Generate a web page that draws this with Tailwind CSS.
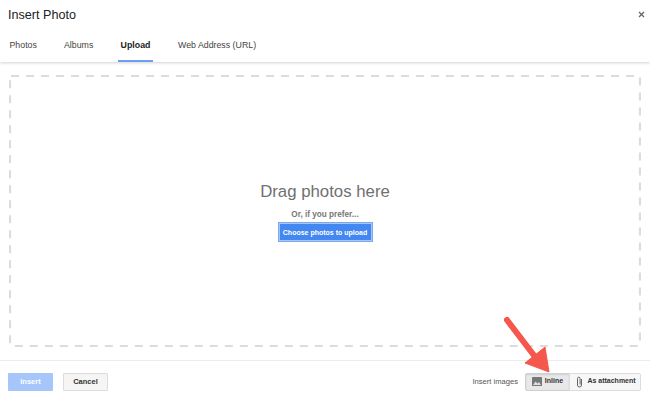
<!DOCTYPE html>
<html>
<head>
<meta charset="utf-8">
<script src="https://cdn.jsdelivr.net/npm/@tailwindcss/browser@4"></script>
</head>
<body class="m-0 bg-white">
<div class="relative w-[650px] h-[400px] overflow-hidden bg-white flex flex-col font-['Liberation_Sans',Arial,sans-serif]">
  <header class="h-[62px] shrink-0 flex flex-col shadow-[0_1px_3px_rgba(0,0,0,0.18)] relative">
    <div class="h-[32px] pl-[8px] pr-[5px] pt-[4px] flex items-start justify-between">
      <h1 class="text-[12.6px] leading-[22px] text-[#222]">Insert Photo</h1>
      <svg class="mt-[7px]" width="7" height="7" viewBox="0 0 7 7"><path d="M1 1L6 6M6 1L1 6" stroke="#666" stroke-width="1.3"/></svg>
    </div>
    <nav class="flex h-[30px] text-[8.8px] text-[#444]">
      <div class="pl-[9.5px] w-[64px] pt-[7px] leading-[12px]">Photos</div>
      <div class="w-[54px] pt-[7px] leading-[12px]">Albums</div>
      <div class="w-[35px] pt-[7px] leading-[12px] font-bold text-[#222] text-center border-b-2 border-[#6f9ef0]">Upload</div>
      <div class="pl-[25px] pt-[7px] leading-[12px]">Web Address (URL)</div>
    </nav>
  </header>
  <main class="relative mx-[9px] mt-[13px] h-[272px] flex flex-col items-center shrink-0">
    <svg class="absolute inset-0" width="632" height="272" viewBox="0 0 632 272"><rect x="1" y="1" width="630" height="270" rx="1" fill="none" stroke="#dcdcdc" stroke-width="2.2" stroke-dasharray="8 7"/></svg>
    <h2 class="mt-[106px] text-[16.8px] leading-[22px] text-[#707070]">Drag photos here</h2>
    <p class="mt-[6px] text-[8.2px] leading-[12px] font-bold text-[#777]">Or, if you prefer...</p>
    <button class="mt-[2px] w-[93px] h-[18px] bg-[#4387f0] border border-[#a9c6f5] outline outline-1 outline-[#7aa9f3] text-white text-[7px] font-bold leading-none">Choose photos to upload</button>
  </main>
  <footer class="mt-[13px] flex-1 border-t border-[#ececec] flex items-center justify-between pl-[8px] pr-[9px]">
    <div class="flex gap-[10px] items-center mt-[2px]">
      <button class="w-[45px] h-[18px] rounded-[1px] bg-[#a5c5fb] text-white text-[7.5px] font-bold">Insert</button>
      <button class="w-[45px] h-[18px] rounded-[1px] bg-[#f5f5f5] border border-[#dcdcdc] text-[#333] text-[7.5px] font-bold">Cancel</button>
    </div>
    <div class="flex items-center mt-[2px]">
      <span class="text-[7.6px] text-[#555] mr-[7px]">Insert images</span>
      <button class="w-[45px] h-[18px] bg-[#e8e8e8] border border-[#cfcfcf] rounded-l-[2px] flex items-center justify-center gap-[3px] text-[7px] font-bold text-[#333] shadow-[inset_0_1px_2px_rgba(0,0,0,0.1)]">
        <svg width="10" height="9" viewBox="0 0 10 9"><rect width="10" height="9" rx="0.5" fill="#777"/><path d="M1 8L3.5 4.5L5.5 6.5L7 5L9 8Z" fill="#ddd"/></svg>
        <span>Inline</span>
      </button>
      <button class="w-[72px] h-[18px] -ml-px bg-[#f7f7f7] border border-[#dcdcdc] rounded-r-[2px] flex items-center justify-center gap-[4px] pl-[2px] text-[7px] font-bold text-[#333]">
        <svg width="7" height="12" viewBox="0 0 7 12" fill="none"><path d="M5.5 3V9a2 2 0 0 1-4 0V2.5a1.3 1.3 0 0 1 2.6 0V8.5" stroke="#555" stroke-width="0.9"/></svg>
        <span>As attachment</span>
      </button>
    </div>
  </footer>
  <svg class="absolute left-[495px] top-[310px]" width="65" height="75" viewBox="0 0 65 75" fill="none">
    <path d="M12 10L44 52" stroke="#f6574c" stroke-width="6" stroke-linecap="round"/>
    <path d="M54 62L30 53L50 37Z" fill="#f6574c" stroke="#f6574c" stroke-linejoin="round"/>
  </svg>
</div>
</body>
</html>
